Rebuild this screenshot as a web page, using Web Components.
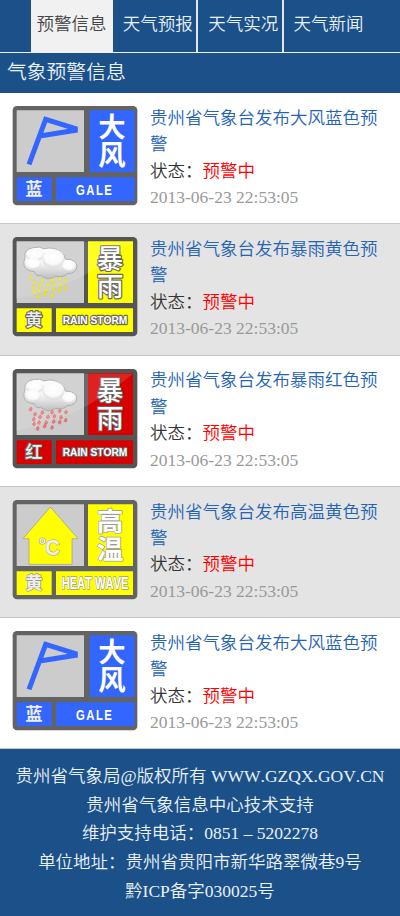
<!DOCTYPE html>
<html lang="zh-CN">
<head>
<meta charset="utf-8">
<title>气象预警信息</title>
<style>
html,body{margin:0;padding:0}
body{width:400px;height:916px;overflow:hidden;background:#1c5089;font:350 17.5px/26.4px "Liberation Serif","Noto Sans CJK SC",sans-serif;font-kerning:none}
</style>
</head>
<body>
<weather-page></weather-page>
<script>
const define=(name,html,setup)=>customElements.define(name,class extends HTMLElement{
  constructor(){
    super();
    const t=document.createElement('template');
    t.innerHTML=html;
    this.attachShadow({mode:'open'}).append(t.content.cloneNode(true));
  }
  connectedCallback(){ if(setup) setup(this,this.shadowRoot); }
});

define('nav-tab',`<style>
:host{display:block;flex:none;box-sizing:border-box;width:85.4px;height:52px;padding:11px 0 0 9.8px;border-right:2px solid #dfe7ef;color:#e9f1fa;white-space:nowrap}
:host([active]){width:82px;padding-left:5.5px;background:#f1f1f1;color:#444;border-right-color:#f1f1f1}
:host([last]){border-right:0}
</style><slot></slot>`);

define('nav-bar',`<style>
:host{display:flex;height:52px;padding-left:31px;background:#1c5089;border-bottom:1px solid #eef3f8}
</style><slot></slot>`);

define('section-title',`<style>
:host{display:block;box-sizing:border-box;height:40px;padding:4px 0 0 7px;background:#1c5089;color:#e9f1fa;font-size:19.8px;line-height:30px}
</style><slot></slot>`);

const cloud=(id,drop,edge)=>`
<defs><linearGradient id="${id}" gradientUnits="userSpaceOnUse" x1="0" y1="62" x2="0" y2="152"><stop offset="0" stop-color="#fff"/><stop offset=".55" stop-color="#f4f4f4"/><stop offset="1" stop-color="#bcbcbc"/></linearGradient>
<radialGradient id="${id}p" cx=".5" cy=".4" r=".6"><stop offset="0" stop-color="#fff"/><stop offset=".65" stop-color="#fafafa"/><stop offset="1" stop-color="#d2d2d2"/></radialGradient></defs>
<path d="M75 98Q70 68 103 65Q120 60 132 69Q158 60 183 78Q196 87 195 99Q228 100 231 120Q229 143 202 143Q190 156 166 151Q145 167 122 148Q108 153 103 137Q76 135 72 117Q70 106 75 98Z" fill="url(#${id})" stroke="#9a9a9a" stroke-width="2.5"/>
<g fill="url(#${id}p)"><ellipse cx="104" cy="86" rx="27" ry="19"/><ellipse cx="99" cy="113" rx="24" ry="18"/><ellipse cx="206" cy="119" rx="21" ry="17"/><ellipse cx="160" cy="98" rx="33" ry="28"/></g>
<g fill="${drop}" stroke="${edge}" stroke-width="1.5">${[[91,153],[104,168],[126,163],[155,162],[178,158],[197,162],[100,183],[119,176],[143,176],[162,174],[182,177],[101,197],[116,193],[137,193],[160,190],[178,192],[196,186],[112,211],[133,204],[155,208]].map(([x,y])=>`<path d="M${x+2} ${y-6}q5 6 3 9q-4 6-8 1q-2-4 5-10z"/>`).join('')}</g>`;
const shine='<path d="M48 218Q200 185 290 125Q360 80 399 47H48Z" fill="#fff" opacity=".13"/>';

const signs={
  gale:{c:'#3366ff',f:'#636363',k:['大','风'],s:'蓝',e:'GALE',ex:228,ey:300,es:46,ew:112,ls:6,fw:700,art:'<path d="M87 208L137 73L226 101V106L124 122" fill="none" stroke="#36f" stroke-width="15"/>',ow:0,kw:82},
  rainy:{c:'#ffff00',f:'#555',k:['暴','雨'],s:'黄',e:'RAIN STORM',ex:188,ey:294,es:31,ew:194,art:cloud('cy','#f6ee00','#d8cf22'),shine,ow:7,fw:500,kw:80,oc:'#686868'},
  rainr:{c:'#d90000',f:'#555',k:['暴','雨'],s:'红',e:'RAIN STORM',ex:188,ey:294,es:31,ew:194,art:cloud('cr','#ef7a80','#d94a53'),shine,ow:6,fw:500,kw:80,oc:'#686868'},
  heat:{c:'#ffff00',f:'#636363',k:['高','温'],s:'黄',e:'HEAT WAVE',ex:185,ey:301,es:47,ew:200,art:'<path d="M151 54L234 149H216V226H87V149H69Z" fill="#ff0" stroke="#999" stroke-width="2"/><circle cx="127" cy="156" r="7" fill="none" stroke="#999" stroke-width="7"/><circle cx="127" cy="156" r="7" fill="none" stroke="#f0f0f0" stroke-width="4"/><text x="136" y="198" font-family="Liberation Sans" font-weight="700" font-size="68" textLength="44" lengthAdjust="spacingAndGlyphs" fill="#f0f0f0" stroke="#999" stroke-width="3" paint-order="stroke">C</text>',ow:4,fw:700,kw:80,oc:'#999'}
};
define('warning-sign',`<style>
:host{display:block;flex:none;width:126px;height:100px}
svg{display:block}
</style><svg viewBox="36 33 378 300" width="126" height="100"></svg>`,(el,root)=>{
  const d=signs[el.parentNode.host.getAttribute('kind')];
  const st=`fill="#fff" stroke="${d.oc||d.c}" stroke-width="${d.ow}" stroke-linejoin="round" paint-order="stroke"`;
  const l=d.ow?264:269,r=d.ow?399:404,cx=d.ow?330:336;
  root.querySelector('svg').innerHTML=`
<rect x="38" y="33" width="374" height="298" rx="13" fill="${d.f}"/>
<path d="M50 46H252V231H50Z" fill="#ccc"/>
<path d="M${l} 46H${r}V231H${l}ZM50 247H155V318H50ZM168 247H${r}V318H168Z" fill="${d.c}"/>
${d.art}
<g font-family="Noto Sans CJK SC" font-weight="${d.fw}" text-anchor="middle" ${st}>
<text x="${cx}" y="125" font-size="${d.kw}">${d.k[0]}</text>
<text x="${cx}" y="211" font-size="${d.kw}">${d.k[1]}</text>
<text x="102" y="301" font-size="52" style="fill:#eee">${d.s}</text></g>
<text x="${d.ex}" y="${d.ey}" font-family="Liberation Sans" font-weight="700" font-size="${d.es}" letter-spacing="${d.ls||0}" textLength="${d.ew}" lengthAdjust="spacingAndGlyphs" ${st}>${d.e}</text>
${d.shine||''}`;
});

define('warning-item',`<style>
:host{display:flex;box-sizing:border-box;height:131.25px;padding:13px 14px 0 12px;gap:12px;background:#fff;border-bottom:1.5px solid #c6c6c6}
:host(:nth-child(even)){background:#e4e4e4}
.body{flex:1;margin-top:-1.2px;color:#333}
.title{color:#2563b5;width:232px}
.state{color:#f00}
time{display:block;color:#999}
</style><warning-sign></warning-sign>
<div class="body"><div class="title"><slot></slot></div><div>状态：<span class="state">预警中</span></div><time>2013-06-23 22:53:05</time></div>`);

define('page-footer',`<style>
:host{display:block;box-sizing:border-box;height:167px;padding-top:13px;background:#1c5089;color:#e9f1fa;text-align:center;line-height:28.6px;white-space:nowrap}
</style><slot></slot>`);

define('weather-page',`<style>:host{display:block;width:400px}</style>
<nav-bar><nav-tab active>预警信息</nav-tab><nav-tab>天气预报</nav-tab><nav-tab>天气实况</nav-tab><nav-tab last>天气新闻</nav-tab></nav-bar>
<section-title>气象预警信息</section-title>
<main>
<warning-item kind="gale">贵州省气象台发布大风蓝色预警</warning-item>
<warning-item kind="rainy">贵州省气象台发布暴雨黄色预警</warning-item>
<warning-item kind="rainr">贵州省气象台发布暴雨红色预警</warning-item>
<warning-item kind="heat">贵州省气象台发布高温黄色预警</warning-item>
<warning-item kind="gale">贵州省气象台发布大风蓝色预警</warning-item>
</main>
<page-footer><div>贵州省气象局@版权所有 WWW.GZQX.GOV.CN</div><div>贵州省气象信息中心技术支持</div><div>维护支持电话：0851 – 5202278</div><div>单位地址：贵州省贵阳市新华路翠微巷9号</div><div>黔ICP备字030025号</div></page-footer>`);
</script>
</body>
</html>
